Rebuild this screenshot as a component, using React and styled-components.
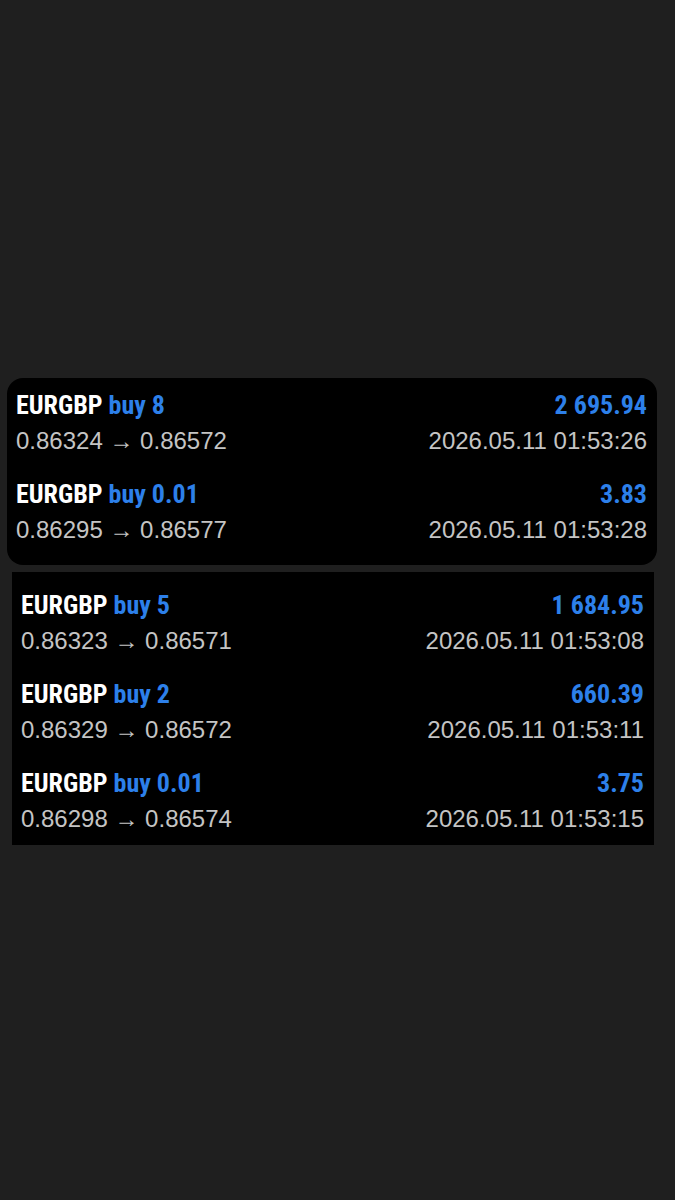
import styled, { createGlobalStyle } from "styled-components";

const GlobalStyle = createGlobalStyle`
  html, body {
    margin: 0;
    padding: 0;
    background: #1f1f1f;
  }
`;

const Page = styled.div`
  min-height: 1200px;
  box-sizing: border-box;
  padding-top: 378px;
  display: flex;
  flex-direction: column;
  gap: 7px;
`;

const Card = styled.div`
  margin-left: ${(p) => p.$left}px;
  width: ${(p) => p.$width}px;
  background: #000;
  border-radius: ${(p) => p.$radius}px;
  padding: ${(p) => p.$pad};
  box-sizing: border-box;
  display: flex;
  flex-direction: column;
  gap: 17px;
`;

const Deal = styled.div`
  display: flex;
  flex-direction: column;
`;

const Line = styled.div`
  display: flex;
  justify-content: space-between;
  align-items: baseline;
`;

const Title = styled.div`
  font-family: Roboto, "Liberation Sans", sans-serif;
  font-stretch: condensed;
  font-weight: 700;
  font-size: 26px;
  line-height: 32px;
  color: #fff;
`;

const Blue = styled.span`
  color: #2d80ea;
`;

const Profit = styled(Title)`
  color: #2d80ea;
`;

const Sub = styled.div`
  font-family: "Liberation Sans", Arial, sans-serif;
  font-size: 24px;
  line-height: 40px;
  color: #c4c4c4;
`;

const first = [
  { vol: "8", from: "0.86324", to: "0.86572", profit: "2 695.94", time: "2026.05.11 01:53:26" },
  { vol: "0.01", from: "0.86295", to: "0.86577", profit: "3.83", time: "2026.05.11 01:53:28" },
];

const second = [
  { vol: "5", from: "0.86323", to: "0.86571", profit: "1 684.95", time: "2026.05.11 01:53:08" },
  { vol: "2", from: "0.86329", to: "0.86572", profit: "660.39", time: "2026.05.11 01:53:11" },
  { vol: "0.01", from: "0.86298", to: "0.86574", profit: "3.75", time: "2026.05.11 01:53:15" },
];

const DealRow = ({ d }) => (
  <Deal>
    <Line>
      <Title>
        EURGBP <Blue>buy {d.vol}</Blue>
      </Title>
      <Profit>{d.profit}</Profit>
    </Line>
    <Line>
      <Sub>
        {d.from} → {d.to}
      </Sub>
      <Sub>{d.time}</Sub>
    </Line>
  </Deal>
);

export default function App() {
  return (
    <>
      <GlobalStyle />
      <Page>
        <Card $left={7} $width={650} $radius={16} $pad="11px 10px 15px 9px">
          {first.map((d, i) => (
            <DealRow key={i} d={d} />
          ))}
        </Card>
        <Card $left={12} $width={642} $radius={0} $pad="17px 10px 6px 9px">
          {second.map((d, i) => (
            <DealRow key={i} d={d} />
          ))}
        </Card>
      </Page>
    </>
  );
}
